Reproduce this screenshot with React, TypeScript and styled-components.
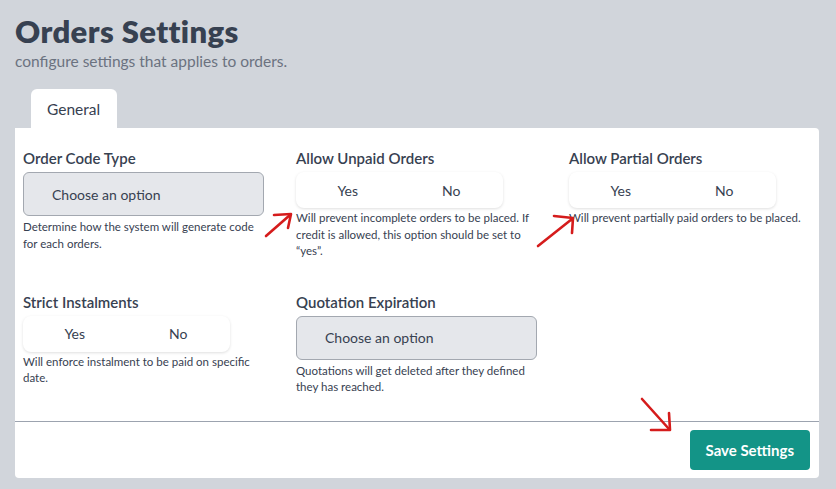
import React, { useState } from 'react';
import styled, { createGlobalStyle } from 'styled-components';

const GlobalStyle = createGlobalStyle`
  * {
    box-sizing: border-box;
  }
  body {
    margin: 0;
    background: #d1d5db;
    font-family: Lato, 'Noto Sans', 'Liberation Sans', sans-serif;
    color: #374151;
  }
`;

const Page = styled.div`
  position: relative;
  padding: 13px 17px 11px 15px;
`;

const Title = styled.h1`
  margin: 0;
  font-size: 31px;
  line-height: 36px;
  font-weight: 800;
  letter-spacing: 0.4px;
  color: #374151;
`;

const Subtitle = styled.p`
  margin: 1px 0 0;
  font-size: 15.5px;
  line-height: 22px;
  color: #6b7280;
`;

const Tabs = styled.div`
  display: flex;
  margin-top: 17px;
  padding-left: 16px;
`;

const Tab = styled.button<{ $active?: boolean }>`
  all: unset;
  height: 39px;
  padding: 0 17px 0 16px;
  display: flex;
  align-items: center;
  font-size: 15.5px;
  color: #374151;
  background: ${(p) => (p.$active ? '#ffffff' : 'transparent')};
  border-radius: 6px 6px 0 0;
  cursor: pointer;
`;

const Card = styled.div`
  background: #ffffff;
  border-radius: 0 4px 4px 4px;
`;

const Fields = styled.div`
  display: grid;
  grid-template-columns: repeat(3, 241px);
  column-gap: 32px;
  row-gap: 32px;
  align-items: start;
  align-content: start;
  padding: 20px 8px 0;
  height: 293px;
`;

const Field = styled.div`
  display: flex;
  flex-direction: column;
`;

const Label = styled.div`
  font-size: 15px;
  line-height: 20px;
  font-weight: 600;
  color: #374151;
  margin-bottom: 4px;
`;

const Select = styled.button`
  all: unset;
  height: 42px;
  padding-left: 28px;
  display: flex;
  align-items: center;
  font-size: 14px;
  color: #374151;
  background: #e5e7eb;
  border: 1px solid #a3a8b0;
  border-radius: 6px;
  cursor: pointer;
`;

const Toggle = styled.div`
  display: flex;
  width: 207px;
  height: 36px;
  background: #ffffff;
  border-radius: 8px;
  box-shadow: 0 1px 3px rgba(0, 0, 0, 0.13);
`;

const ToggleOption = styled.button<{ $selected?: boolean }>`
  all: unset;
  flex: 1;
  display: flex;
  align-items: center;
  justify-content: center;
  font-size: 14px;
  color: #374151;
  border-radius: 8px;
  background: ${(p) => (p.$selected ? '#f3f4f6' : 'transparent')};
  cursor: pointer;
`;

const Help = styled.p<{ $gap: number }>`
  margin: ${(p) => p.$gap}px 0 0;
  font-size: 11.5px;
  line-height: 16.5px;
  color: #374151;
`;

const Footer = styled.div`
  display: flex;
  justify-content: flex-end;
  border-top: 1px solid #9ca3af;
  padding: 8px 9px 8px;
`;

const SaveButton = styled.button`
  all: unset;
  height: 40px;
  padding: 0 16px;
  display: flex;
  align-items: center;
  background: #139487;
  color: #ffffff;
  font-size: 15px;
  font-weight: 700;
  border-radius: 4px;
  cursor: pointer;
`;

const Annotations = styled.svg`
  position: absolute;
  left: 0;
  top: 0;
  pointer-events: none;
`;

const Arrow = styled.g`
  stroke: #d51c1c;
  stroke-width: 2.6;
  stroke-linecap: round;
  stroke-linejoin: round;
  fill: none;
`;

type YesNoProps = { label: string; help: string };

const YesNoField = ({ label, help }: YesNoProps) => {
  const [value, setValue] = useState<boolean | null>(null);
  return (
    <Field>
      <Label>{label}</Label>
      <Toggle>
        <ToggleOption $selected={value === true} onClick={() => setValue(true)}>
          Yes
        </ToggleOption>
        <ToggleOption $selected={value === false} onClick={() => setValue(false)}>
          No
        </ToggleOption>
      </Toggle>
      <Help $gap={2}>{help}</Help>
    </Field>
  );
};

type SelectProps = { label: string; help: string };

const SelectField = ({ label, help }: SelectProps) => (
  <Field>
    <Label>{label}</Label>
    <Select>Choose an option</Select>
    <Help $gap={3}>{help}</Help>
  </Field>
);

const App = () => {
  return (
    <Page>
      <GlobalStyle />
      <Title>Orders Settings</Title>
      <Subtitle>configure settings that applies to orders.</Subtitle>
      <Tabs>
        <Tab $active>General</Tab>
      </Tabs>
      <Card>
        <Fields>
          <SelectField
            label="Order Code Type"
            help="Determine how the system will generate code for each orders."
          />
          <YesNoField
            label="Allow Unpaid Orders"
            help={'Will prevent incomplete orders to be placed. If credit is allowed, this option should be set to \u201cyes\u201d.'}
          />
          <YesNoField
            label="Allow Partial Orders"
            help="Will prevent partially paid orders to be placed."
          />
          <YesNoField
            label="Strict Instalments"
            help="Will enforce instalment to be paid on specific date."
          />
          <SelectField
            label="Quotation Expiration"
            help="Quotations will get deleted after they defined they has reached."
          />
        </Fields>
        <Footer>
          <SaveButton>Save Settings</SaveButton>
        </Footer>
      </Card>
      <Annotations width="836" height="489" viewBox="0 0 836 489">
        <Arrow>
          <path d="M266 236 L290 215" />
          <path d="M274 215 L291 214 L288 228" />
        </Arrow>
        <Arrow>
          <path d="M538 246 L572 219" />
          <path d="M554 216 L573 218 L572 233" />
        </Arrow>
        <Arrow>
          <path d="M642 399 L669 429" />
          <path d="M651 430 L670 430 L669 413" />
        </Arrow>
      </Annotations>
    </Page>
  );
};

export default App;
